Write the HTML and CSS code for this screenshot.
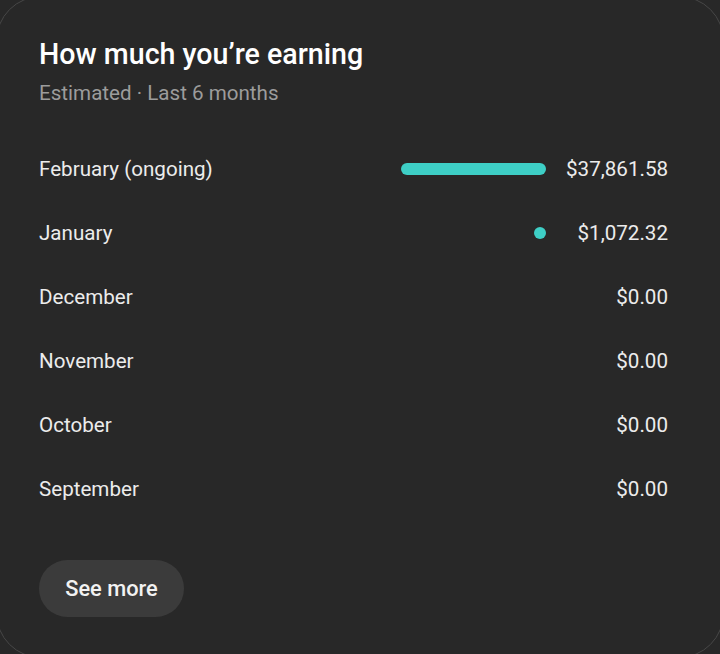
FILE: index.html
```html
<!DOCTYPE html>
<html lang="en">
<head>
    <meta charset="UTF-8">
    <meta name="viewport" content="width=device-width, initial-scale=1.0">
    <title>How much you're earning</title>
    <link rel="stylesheet" href="styles.css">
</head>
<body>
    <div class="card">
        <h1 class="card-title">How much you’re earning</h1>
        <div class="card-subtitle">Estimated · Last 6 months</div>

        <div class="earnings">
            <div class="row">
                <div class="month">February (ongoing)</div>
                <div class="bar-cell"><div class="bar" style="width: 145px"></div></div>
                <div class="amount">$37,861.58</div>
            </div>
            <div class="row">
                <div class="month">January</div>
                <div class="bar-cell"><div class="bar" style="width: 12px"></div></div>
                <div class="amount">$1,072.32</div>
            </div>
            <div class="row">
                <div class="month">December</div>
                <div class="bar-cell"></div>
                <div class="amount">$0.00</div>
            </div>
            <div class="row">
                <div class="month">November</div>
                <div class="bar-cell"></div>
                <div class="amount">$0.00</div>
            </div>
            <div class="row">
                <div class="month">October</div>
                <div class="bar-cell"></div>
                <div class="amount">$0.00</div>
            </div>
            <div class="row">
                <div class="month">September</div>
                <div class="bar-cell"></div>
                <div class="amount">$0.00</div>
            </div>
        </div>

        <button class="see-more">See more</button>
    </div>
</body>
</html>
```

FILE: styles.css
```css
html, body {
    margin: 0;
    padding: 0;
    height: 100%;
    overflow: hidden;
    background-color: #282828;
}
body {
    font-family: Roboto, "Noto Sans", sans-serif;
    color: #ececec;
}
.card {
    box-sizing: border-box;
    margin: -4px;
    height: calc(100% + 8px);
    padding: 39px 55px 0 42px;
    border: 1px solid #474747;
    border-radius: 45px;
    background-color: #282828;
}
.card-title {
    margin: 0;
    font-size: 28.6px;
    font-weight: 500;
    line-height: 36px;
    color: #ffffff;
}
.card-subtitle {
    margin-top: 7px;
    font-size: 20.6px;
    line-height: 28px;
    color: #9c9c9c;
}
.earnings {
    margin-top: 30px;
}
.row {
    display: grid;
    grid-template-columns: 1fr 160px 102px;
    column-gap: 20px;
    align-items: center;
    height: 64px;
    font-size: 20.6px;
}
.bar-cell {
    display: flex;
    justify-content: flex-end;
}
.bar {
    height: 12px;
    border-radius: 6px;
    background-color: #3ecfc6;
}
.amount {
    text-align: right;
}
.see-more {
    margin-top: 39px;
    width: 145px;
    height: 57px;
    border: none;
    border-radius: 29px;
    background-color: #3b3b3b;
    color: #f2f2f2;
    font-family: Roboto, "Noto Sans", sans-serif;
    font-size: 21.8px;
    font-weight: 500;
    cursor: pointer;
}
```
